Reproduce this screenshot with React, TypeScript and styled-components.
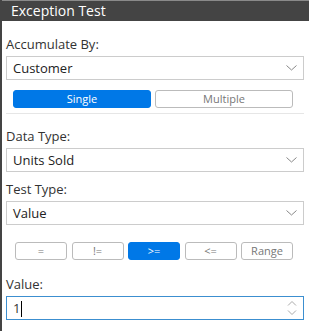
import styled, { createGlobalStyle } from 'styled-components';

const Global = createGlobalStyle`
  html, body {
    margin: 0;
    padding: 0;
    background: #fff;
  }
  body {
    font-family: "Open Sans", "Noto Sans", sans-serif;
    color: #333;
  }
`;

const Panel = styled.div`
  width: 309px;
  height: 331px;
  box-sizing: border-box;
  border-left: 2px solid #444;
  background: #fff;
  overflow: hidden;
`;

const Header = styled.div`
  height: 21px;
  margin-left: -2px;
  background: #444;
  border-top: 1px solid #8a8a8a;
  box-sizing: border-box;
  color: #fff;
  font-size: 14px;
  line-height: 19px;
  padding-left: 11px;
`;

const Body = styled.div`
  padding: 15px 5px 0 4px;
  display: flex;
  flex-direction: column;
`;

const Label = styled.div<{ $top?: number }>`
  font-size: 13px;
  line-height: 16px;
  color: #333;
  margin-top: ${(p) => p.$top ?? 0}px;
  margin-bottom: 4px;
`;

const Select = styled.div`
  height: 24px;
  box-sizing: border-box;
  border: 1px solid #ccc;
  display: flex;
  align-items: center;
  justify-content: space-between;
  padding: 0 6px 0 6px;
  font-size: 13px;
  color: #222;
`;

const Chevron = () => (
  <svg width="11" height="6" viewBox="0 0 11 6">
    <path d="M0.5 0.5 L5.5 5 L10.5 0.5" fill="none" stroke="#888" strokeWidth="1" />
  </svg>
);

const ButtonRow = styled.div<{ $left: number; $right: number; $gap: number; $top: number }>`
  display: flex;
  gap: ${(p) => p.$gap}px;
  padding: 0 ${(p) => p.$right}px 0 ${(p) => p.$left}px;
  margin-top: ${(p) => p.$top}px;
`;

const Toggle = styled.div<{ $active?: boolean }>`
  flex: 1;
  height: 18px;
  box-sizing: border-box;
  border-radius: 3px;
  border: 1px solid ${(p) => (p.$active ? '#0078e7' : '#bbb')};
  background: ${(p) => (p.$active ? '#0078e7' : '#fff')};
  color: ${(p) => (p.$active ? '#fff' : '#777')};
  font-size: 11px;
  line-height: 16px;
  text-align: center;
`;

const Divider = styled.div`
  height: 1px;
  background: #e6e6e6;
  margin: 5px 0 14px 0;
`;

const Input = styled.div`
  height: 24px;
  box-sizing: border-box;
  border: 1px solid #3c8fd0;
  display: flex;
  align-items: center;
  justify-content: space-between;
  padding: 0 6px 0 6px;
  font-size: 13px;
  color: #333;
`;

const Caret = styled.span`
  display: inline-block;
  width: 1px;
  height: 16px;
  background: #000;
  margin-left: 1px;
  vertical-align: middle;
`;

const Spinner = () => (
  <svg width="10" height="15" viewBox="0 0 10 15">
    <path d="M1 4.5 L5 0.5 L9 4.5" fill="none" stroke="#aaa" strokeWidth="1" />
    <path d="M1 9.5 L5 13.5 L9 9.5" fill="none" stroke="#aaa" strokeWidth="1" />
  </svg>
);

const ops = ['=', '!=', '>=', '<=', 'Range'];

export default function App() {
  return (
    <>
      <Global />
      <Panel>
        <Header>Exception Test</Header>
        <Body>
          <Label>Accumulate By:</Label>
          <Select>
            <span>Customer</span>
            <Chevron />
          </Select>
          <ButtonRow $left={7} $right={11} $gap={4} $top={10}>
            <Toggle $active>Single</Toggle>
            <Toggle>Multiple</Toggle>
          </ButtonRow>
          <Divider />
          <Label>Data Type:</Label>
          <Select>
            <span>Units Sold</span>
            <Chevron />
          </Select>
          <Label $top={9}>Test Type:</Label>
          <Select>
            <span>Value</span>
            <Chevron />
          </Select>
          <ButtonRow $left={9} $right={11} $gap={4.5} $top={17}>
            {ops.map((o) => (
              <Toggle key={o} $active={o === '>='}>
                {o}
              </Toggle>
            ))}
          </ButtonRow>
          <Label $top={16}>Value:</Label>
          <Input>
            <span>
              1<Caret />
            </span>
            <Spinner />
          </Input>
        </Body>
      </Panel>
    </>
  );
}
